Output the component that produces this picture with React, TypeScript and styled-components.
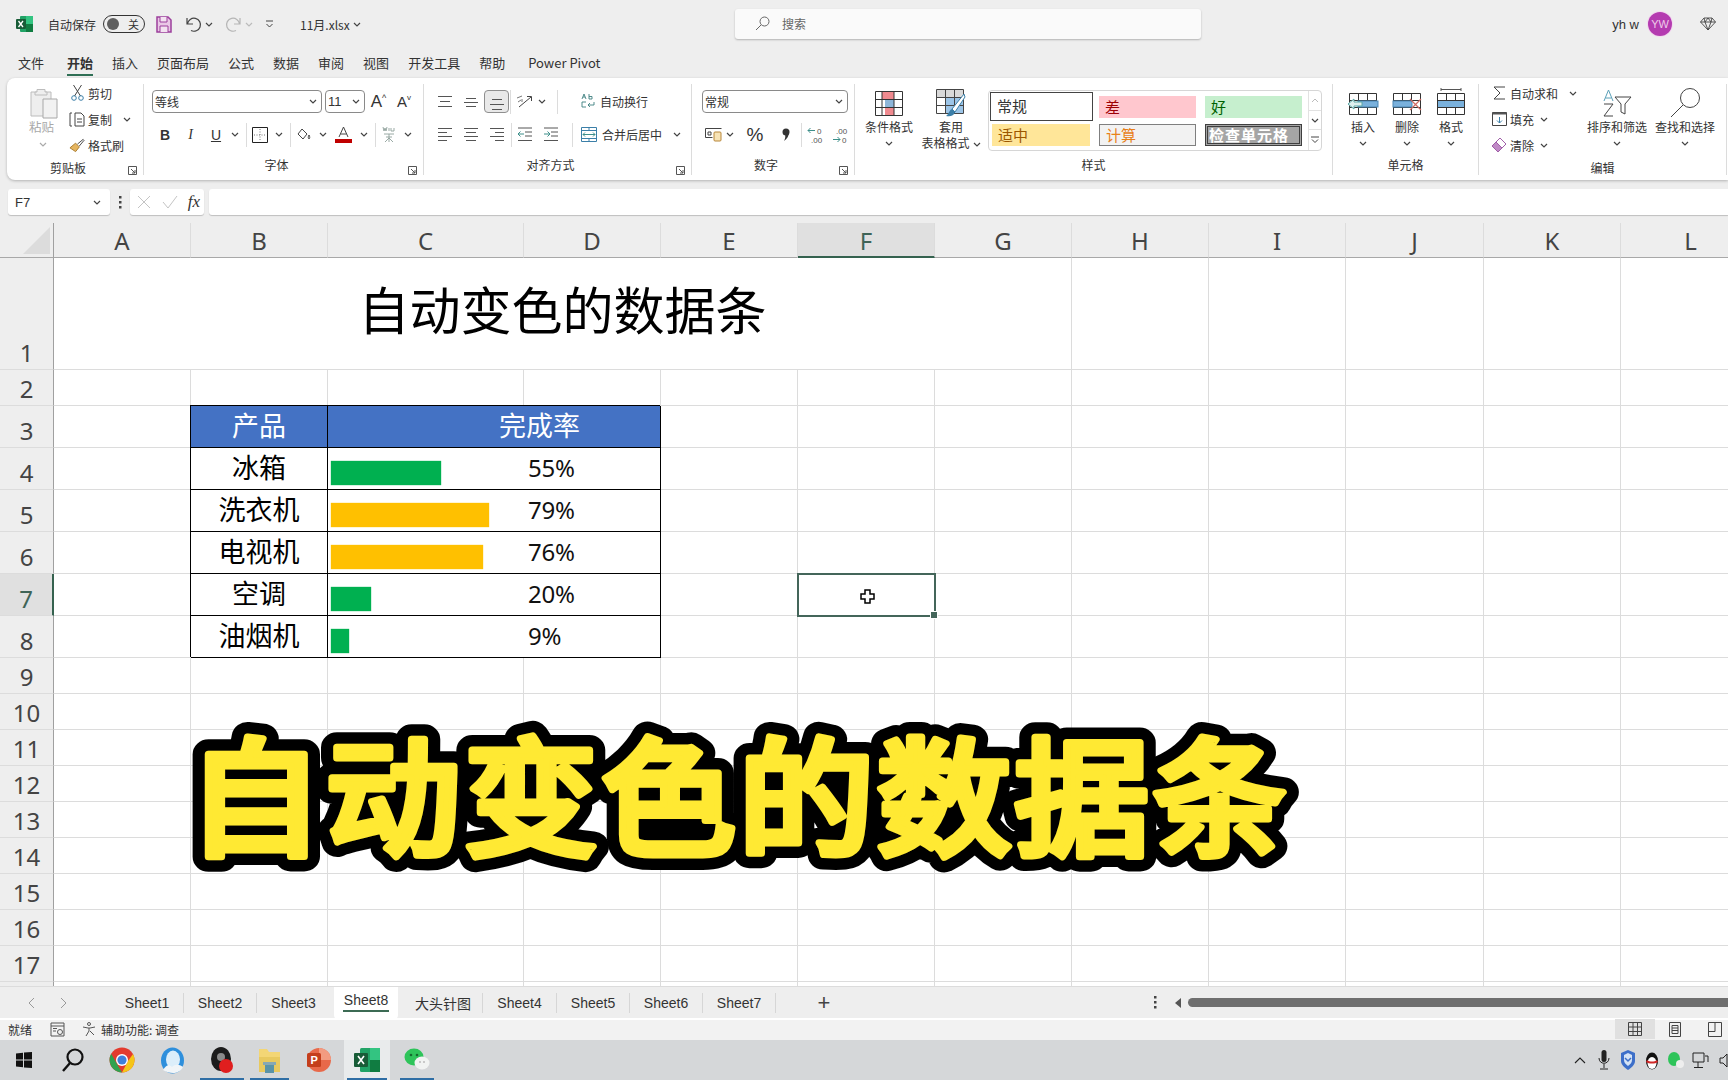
import React from "react";
import styled, { createGlobalStyle } from "styled-components";

const CJK = `"Noto Sans CJK SC", "Noto Sans", sans-serif`;

const Global = createGlobalStyle`
  html, body { margin: 0; padding: 0; background: #eee; }
  * { box-sizing: border-box; }
  body { font-family: ${CJK}; color: #333; }
`;

const Page = styled.div`
  position: relative; width: 1728px; height: 1080px; overflow: hidden;
  display: flex; flex-direction: column; background: #eeeeee;
`;

/* ---------- title bar ---------- */
const TitleBar = styled.header`
  height: 48px; display: grid; grid-template-columns: 735px 466px 1fr; align-items: center;
`;
const QuickAccess = styled.div`display: flex; align-items: center; padding-left: 16px; font-size: 12px;`;
const AutoSaveLabel = styled.span`margin-left: 15px; width: 48px; white-space: nowrap; color: #333;`;
const Toggle = styled.span`
  margin-left: 7px; width: 42px; height: 18px; border: 1px solid #333; border-radius: 9px;
  display: flex; align-items: center; justify-content: space-between; padding: 0 5px 0 3px; font-size: 11px;
  &::before { content: ""; width: 12px; height: 12px; border-radius: 50%; background: #5f5f5f; }
`;
const QuickSlot = styled.span<{ $ml: number }>`
  margin-left: ${p => p.$ml}px; display: inline-flex; align-items: center;
`;
const FileName = styled.span`margin-left: 26px; font-size: 12px; display: inline-flex; align-items: center; gap: 3px; color: #333;`;
const Search = styled.div`
  height: 30px; margin-top: -1px; background: #fafafa; border-radius: 3px; box-shadow: 0 1px 2px rgba(0,0,0,.25);
  display: flex; align-items: center; gap: 12px; padding-left: 20px; font-size: 12px; color: #666; padding-bottom: 1px;
`;
const UserArea = styled.div`display: flex; justify-content: flex-end; align-items: center; padding-right: 12px; font-size: 12px;`;
const UserName = styled.span`font-family: "Liberation Sans", sans-serif; font-size: 13px; color: #333;`;
const Avatar = styled.span`
  margin: 0 28px 0 9px; width: 24px; height: 24px; border-radius: 50%; background: #b43bb0; color: #eecbe9;
  display: flex; align-items: center; justify-content: center; font-size: 11px; font-family: "Liberation Sans", sans-serif;
  box-shadow: 0 0 0 1px #f2d9ef;
`;

/* ---------- menu ---------- */
const MenuBar = styled.nav`
  height: 30px; display: flex; align-items: center; gap: 19px; padding: 0 0 2px 18px; font-size: 13px; color: #333;
`;
const MenuItem = styled.span<{ $active?: boolean; $extra?: number }>`
  position: relative; white-space: nowrap; margin-left: ${p => p.$extra ?? 0}px;
  font-weight: ${p => (p.$active ? 700 : 400)};
  ${p => p.$active && `&::after { content: ""; position: absolute; left: 0; right: 0; bottom: -4px; height: 2px; background: #2f6f55; }`}
`;

/* ---------- ribbon ---------- */
const Ribbon = styled.section`
  margin-left: 7px; height: 102px; flex: none; background: #fff; border-radius: 8px 0 0 8px;
  box-shadow: 0 1px 3px rgba(0,0,0,.25); display: flex; padding-top: 6px; font-size: 12px; color: #333;
`;
const Group = styled.div<{ $w: number }>`
  position: relative; width: ${p => p.$w}px; height: 91px; flex: none; border-right: 1px solid #dcdcdc;
  display: flex; flex-direction: column;
`;
const GroupBody = styled.div`height: 74px; display: flex; align-items: flex-start;`;
const GroupLabel = styled.div<{ $launcher?: boolean }>`
  height: 20px; line-height: 20px; margin-top: 3px; text-align: center; font-size: 12px; color: #333;
  padding-right: ${p => (p.$launcher ? 14 : 0)}px;
`;
const Launcher = styled.span`position: absolute; right: 6px; bottom: 0; width: 9px; height: 9px; display: flex;`;
const PasteButton = styled.div`
  width: 63px; padding: 4px 0 0 23px; display: flex; flex-direction: column; align-items: flex-start; color: #a9a9a9; line-height: 16px;
`;
const PasteText = styled.span`margin: 0 0 7px -1px; font-size: 12.5px; white-space: nowrap;`;
const PasteChev = styled.span`display: flex; margin-left: 9px;`;
const SmallColumn = styled.div<{ $pl?: number; $w: number }>`
  width: ${p => p.$w}px; padding-left: ${p => p.$pl ?? 0}px; display: flex; flex-direction: column; gap: 6px; flex: none; margin-top: -1px;
`;
const SmallButton = styled.div`height: 20px; display: flex; align-items: center; gap: 3px; white-space: nowrap;`;
const SmallIcon = styled.span`width: 16px; display: flex; justify-content: center; flex: none;`;
const Stack = styled.div<{ $pl?: number }>`
  display: flex; flex-direction: column; padding: 6px 0 0 ${p => p.$pl ?? 0}px; gap: 10px;
`;
const ToolRow = styled.div`height: 23px; display: flex; align-items: center;`;
const Combo = styled.div<{ $w: number; $ml?: number }>`
  width: ${p => p.$w}px; margin-left: ${p => p.$ml ?? 0}px; height: 23px; border: 1px solid #8a8a8a; border-radius: 4px;
  display: flex; align-items: center; justify-content: space-between; padding: 0 4px 0 2px; font-size: 12px; color: #333; background: #fff;
`;
const Tool = styled.span<{ $w: number; $pressed?: boolean }>`
  width: ${p => p.$w}px; height: 23px; flex: none; display: flex; align-items: center; justify-content: center;
  ${p => p.$pressed && `background: #e9e9e9; border: 1px solid #8f8f8f; border-radius: 4px;`}
`;
const Letter = styled.span<{ $bold?: boolean; $italic?: boolean; $under?: boolean }>`
  font-family: ${p => (p.$italic ? `"Liberation Serif", serif` : `"Liberation Sans", sans-serif`)}; font-size: 14px;
  font-weight: ${p => (p.$bold ? 700 : 400)}; font-style: ${p => (p.$italic ? "italic" : "normal")};
  text-decoration: ${p => (p.$under ? "underline" : "none")}; color: #333;
`;
const ToolDivider = styled.span<{ $w: number }>`
  width: ${p => p.$w}px; height: 24px; flex: none; display: flex; justify-content: center;
  &::before { content: ""; width: 1px; background: #dcdcdc; }
`;
const LabelButton = styled.span<{ $w: number; $ml?: number }>`
  width: ${p => p.$w}px; margin-left: ${p => p.$ml ?? 0}px; height: 23px; display: flex; align-items: center; gap: 5px; white-space: nowrap; flex: none; padding-bottom: 1px;
`;
const BigButton = styled.div<{ $w: number; $ml?: number }>`
  width: ${p => p.$w}px; margin-left: ${p => p.$ml ?? 0}px; flex: none; padding-top: 3px;
  display: flex; flex-direction: column; align-items: center; line-height: 16px; white-space: nowrap;
`;
const BigIcon = styled.span`height: 32px; display: flex; align-items: center; justify-content: center;`;
const ChevLine = styled.span`height: 16px; display: flex; align-items: center; justify-content: center;`;
const InlineChev = styled.span<{ $ml?: number }>`display: inline-flex; vertical-align: middle; margin-left: ${p => p.$ml ?? 3}px;`;
const Gallery = styled.div`
  margin: 6px 0 0 7px; width: 334px; height: 61px; border: 1px solid #d6d6d6; border-radius: 4px; display: flex; flex: none;
`;
const GalleryGrid = styled.div`
  width: 319px; display: grid; grid-template-columns: 107px 106px 106px; grid-template-rows: 30px 30px; font-size: 15px;
`;
const StyleCell = styled.div<{ $kind: "normal" | "bad" | "good" | "neutral" | "calc" | "check" }>`
  display: flex; align-items: center; padding: 0 0 2px 6px;
  ${p => ({
    normal: "margin:1px 3px 0 1px;background:#fff;border:1px solid #444;color:#333;",
    bad: "margin:5px 6px 3px 3px;background:#ffc7ce;color:#9c0006;",
    good: "margin:5px 6px 3px 3px;background:#c6efce;color:#006100;",
    neutral: "margin:3px 6px 5px 3px;background:#ffe699;color:#9c5700;",
    calc: "margin:3px 6px 5px 3px;background:#f2f2f2;border:1px solid #7f7f7f;color:#e8811a;",
    check: "margin:3px 6px 5px 3px;background:#a5a5a5;border:3px double #3f3f3f;color:#fff;font-weight:700;letter-spacing:1px;padding-left:1px;",
  }[p.$kind])}
`;
const GalleryScroll = styled.div`
  flex: 1; display: grid; grid-template-rows: 20px 19px 1fr; border-left: 1px solid #e2e2e2;
`;
const ScrollButton = styled.span`
  display: flex; align-items: center; justify-content: center; border-bottom: 1px solid #e2e2e2;
  &:last-child { border-bottom: 0; }
`;

/* ---------- formula bar ---------- */
const FormulaBar = styled.div`
  margin-top: 9px; height: 26px; flex: none; display: flex; padding-left: 8px;
`;
const NameBox = styled.div`
  width: 102px; background: #fff; border-radius: 3px; box-shadow: 0 1px 1px rgba(0,0,0,.2);
  display: flex; align-items: center; justify-content: space-between; padding: 0 9px 0 7px; font: 13px "Liberation Sans", sans-serif; color: #333;
`;
const Dots = styled.span`width: 20px; display: flex; align-items: center; justify-content: center;`;
const FxBox = styled.div`
  width: 74px; background: #fff; border-radius: 3px; box-shadow: 0 1px 1px rgba(0,0,0,.2);
  display: flex; align-items: center; justify-content: space-between; padding: 0 4px 0 6px;
`;
const FxText = styled.span`font: italic 17px "Liberation Serif", serif; color: #333;`;
const FormulaInput = styled.div`
  flex: 1; margin-left: 5px; background: #fff; border-radius: 3px 0 0 3px; box-shadow: 0 1px 1px rgba(0,0,0,.2);
`;

/* ---------- sheet ---------- */
const colWidths = [54, 137, 137, 196, 137, 137, 137, 137, 137, 137, 138, 137, 140];
const rowHeights = [35, 112, 36, 42, 42, 42, 42, 42, 42, 36, 36, 36, 36, 36, 36, 36, 36, 36, 36];

const Sheet = styled.main`
  margin-top: 8px; height: 763px; flex: none; overflow: hidden; display: grid; background: #fff;
  grid-template-columns: ${colWidths.map(w => `${w}px`).join(" ")};
  grid-template-rows: ${rowHeights.map(h => `${h}px`).join(" ")};
`;
const Corner = styled.div`
  background: #eee; border-bottom: 1px solid #a8a8a8; border-right: 1px solid #a0a0a0; position: relative; display: flex;
  align-items: flex-end; justify-content: flex-end; padding: 0 3px 3px 0;
`;
const ColHead = styled.div<{ $sel?: boolean }>`
  background: ${p => (p.$sel ? "#e0e0e0" : "#eee")}; color: ${p => (p.$sel ? "#3f6457" : "#444")};
  border-bottom: ${p => (p.$sel ? "2px solid #35624f" : "1px solid #a8a8a8")};
  border-right: 1px solid #dcdcdc; display: flex; align-items: center; justify-content: center;
  font: 24px/1 "Noto Sans", sans-serif; padding-top: 2px;
`;
const RowHead = styled.div<{ $sel?: boolean }>`
  background: ${p => (p.$sel ? "#e0e0e0" : "#eee")}; color: ${p => (p.$sel ? "#3f6457" : "#444")};
  border-right: ${p => (p.$sel ? "2px solid #35624f" : "1px solid #a0a0a0")}; border-bottom: 1px solid #dcdcdc;
  display: flex; align-items: flex-end; justify-content: center; font: 24px/33px "Noto Sans", sans-serif;
`;
const Cell = styled.div<{ $span?: number; $sel?: boolean }>`
  position: relative; min-width: 0; border-right: 1px solid #dcdcdc; border-bottom: 1px solid #dcdcdc;
  ${p => p.$span && `grid-column: span ${p.$span};`}
  ${p => p.$sel && `z-index: 3; border: 2px solid #44665a; margin: -1px; display: flex; align-items: center; justify-content: center;
    &::after { content: ""; position: absolute; right: -4px; bottom: -4px; width: 6px; height: 6px; background: #44665a; border: 1px solid #fff; }`}
`;
const TitleCell = styled(Cell)`
  display: flex; align-items: center; justify-content: center; padding-bottom: 12px; font-size: 51px; color: #000;
`;
const TableCell = styled.div<{ $head?: boolean; $span?: number }>`
  position: relative; z-index: 1; min-width: 0; border-right: 1px solid #000; border-bottom: 1px solid #000; padding-bottom: 5px;
  box-shadow: -1px -1px 0 #000; display: flex; align-items: center; justify-content: center; color: ${p => (p.$head ? "#fff" : "#000")};
  background: ${p => (p.$head ? "#4472c4" : "#fff")}; font-size: 27px; line-height: 1;
  ${p => p.$span && `grid-column: span ${p.$span};`}
`;
const RateHead = styled(TableCell)`justify-content: flex-start; padding-left: 171px;`;
const RateCell = styled(TableCell)`justify-content: flex-start; align-items: stretch; padding-bottom: 0;`;
const BarTrack = styled.div`width: 200px; flex: none; padding: 13px 0 3px 3px;`;
const Bar = styled.div<{ $c: string }>`height: 24px; background: ${p => p.$c}; box-shadow: 0 0 1px ${p => p.$c};`;
const Percent = styled.span`align-self: center; padding-bottom: 2px; font: 24px/1 "Noto Sans", sans-serif; color: #111; letter-spacing: -.2px;`;
const Cursor = styled.span`display: flex; margin: 2px 0 0 2px;`;

/* ---------- headline overlay ---------- */
const Headline = styled.svg`
  position: absolute; left: 180px; top: 700px; z-index: 5; overflow: visible;
  font: 500 128px ${CJK}; letter-spacing: 2px;
`;
const HeadlineBack = styled.text`
  fill: #000; stroke: #000; stroke-width: 30px; stroke-linejoin: round; stroke-linecap: round;
`;
const HeadlineFront = styled.text`
  fill: #ffe933; stroke: #ffe933; stroke-width: 7px; stroke-linejoin: round; stroke-linecap: round;
`;

/* ---------- tabs / status / taskbar ---------- */
const TabBar = styled.div`
  height: 32px; flex: none; display: flex; align-items: center; background: #eee; border-top: 1px solid #dcdcdc; font-size: 14px; color: #333;
`;
const TabNav = styled.div`width: 111px; padding-left: 28px; display: flex; gap: 25px; flex: none;`;
const Tab = styled.span<{ $w: number; $active?: boolean; $noSep?: boolean; $pl?: number }>`
  width: ${p => p.$w}px; flex: none; height: ${p => (p.$active ? 32 : 20)}px; display: flex; justify-content: center; white-space: nowrap;
  align-items: center; font-family: "Liberation Sans", ${CJK}; padding-left: ${p => p.$pl ?? 0}px;
  border-right: ${p => (p.$noSep ? "0" : "1px solid #d6d6d6")};
  ${p => p.$active && `position: relative; background: #fff; border-radius: 0 0 4px 4px; padding-bottom: 5px; margin: 0 0 0 4px;
    &::after { content: ""; position: absolute; left: 9px; right: 9px; bottom: 7px; height: 2px; background: #3c6b54; }`}
`;
const AddTab = styled.span`margin-left: 38px; font: 22px/1 "Liberation Sans", sans-serif; color: #444; width: 20px; text-align: center;`;
const ScrollArea = styled.div`
  margin-left: auto; width: 580px; display: flex; align-items: center; flex: none;
`;
const ScrollDots = styled.span`width: 14px; display: flex; justify-content: center;`;
const ScrollLeft = styled.span`
  width: 0; height: 0; border: 5px solid transparent; border-right: 6px solid #555; border-left: 0; margin: 0 7px 0 13px;
`;
const ScrollThumb = styled.span`flex: 1; height: 9px; border-radius: 5px 0 0 5px; background: #6f6f6f;`;
const StatusBar = styled.div`
  height: 22px; flex: none; display: flex; align-items: center; background: #f2f2f2; border-top: 2px solid #fff; padding: 0 0 2px 8px; font-size: 12px; color: #333;
`;
const StatusSlot = styled.span<{ $ml: number }>`margin-left: ${p => p.$ml}px; display: flex; align-items: center; gap: 4px;`;
const ViewButtons = styled.div`margin: -2px -7px -2px auto; display: flex;`;
const ViewButton = styled.span<{ $on?: boolean }>`
  width: 40px; height: 20px; display: flex; align-items: center; justify-content: center; background: ${p => (p.$on ? "#e0e0e0" : "transparent")};
`;
const Taskbar = styled.footer`
  height: 40px; flex: none; background: #d5d7d9; display: flex; align-items: center;
`;
const TaskIcon = styled.span<{ $w: number; $ml?: number; $run?: boolean; $on?: boolean }>`
  position: relative; width: ${p => p.$w}px; margin-left: ${p => p.$ml ?? 0}px; height: 40px; flex: none; display: flex; align-items: center; justify-content: center;
  background: ${p => (p.$on ? "#e9ebec" : "transparent")};
  ${p => p.$run && `&::after { content: ""; position: absolute; left: 3px; right: 3px; bottom: 0; height: 2px; background: #2f6ea5; }`}
`;
const Tray = styled.div`margin-left: auto; display: flex; align-items: center; width: 160px; flex: none;`;
const TrayItem = styled.span`width: 24px; flex: none; display: flex; justify-content: center;`;

/* ---------- icons ---------- */
const Chev: React.FC<{ c?: string }> = ({ c = "#444" }) => (
  <svg width="8" height="5" viewBox="0 0 8 5"><path d="M1 1l3 3 3-3" fill="none" stroke={c} strokeWidth="1.2" /></svg>
);
const Lines: React.FC<{ kind: string }> = ({ kind }) => {
  const map: Record<string, number[][]> = {
    top: [[1, 2, 15], [3, 7, 13], [1, 12, 15]],
    mid: [[3, 4, 13], [1, 8, 15], [3, 12, 13]],
    bot: [[3, 5, 13], [1, 10, 15], [3, 15, 13]],
    left: [[1, 1, 15], [1, 5, 10], [1, 9, 15], [1, 13, 10]],
    center: [[1, 1, 15], [3, 5, 13], [1, 9, 15], [3, 13, 13]],
    right: [[1, 1, 15], [6, 5, 15], [1, 9, 15], [6, 13, 15]],
  };
  return (
    <svg width="16" height="16" viewBox="0 0 16 16">
      {map[kind].map((l, i) => <line key={i} x1={l[0]} x2={l[2]} y1={l[1] + .5} y2={l[1] + .5} stroke="#555" />)}
    </svg>
  );
};
const Indent: React.FC<{ out?: boolean }> = ({ out }) => (
  <svg width="16" height="15" viewBox="0 0 16 15">
    <path d="M1 1h14M8 5h7M8 9h7M1 13.5h14" stroke="#555" fill="none" />
    <path d={out ? "M1 7h6M3.5 4.5L1 7l2.5 2.5" : "M1 7h6M4.5 4.5L7 7 4.5 9.500"} stroke="#3d8f8a" fill="none" />
  </svg>
);
const GridIcon: React.FC<{ kind: string }> = ({ kind }) => (
  <svg width="32" height="30" viewBox="0 0 32 30">
    <g fill="none" stroke="#333">
      <path d="M2.500 5.500h27v21h-27zM2.500 12.500h27M2.500 19.500h27M11.500 5.500v21M20.500 5.500v21" />
    </g>
    {kind === "insert" && <><rect x="11" y="13" width="20" height="6" fill="#7ab1dc" stroke="#4a87b5" /><path d="M15 14v4H7v3l-6-5 6-5v3z" fill="#dff0ef" stroke="#5aa6a6" /></>}
    {kind === "delete" && <><rect x="2" y="13" width="19" height="6" fill="#7ab1dc" stroke="#4a87b5" /><path d="M19 11l11 11M30 11L19 22" stroke="#d06a62" strokeWidth="1.2" /></>}
    {kind === "format" && <><rect x="3" y="12.500" width="26" height="7" fill="#7ab1dc" /><path d="M6 1.500h20M6 0v3M26 0v3" stroke="#555" /><path d="M2.500 12.500h27M2.500 19.500h27" stroke="#333" fill="none" /></>}
  </svg>
);

const ExcelLogo = () => (
  <svg width="17" height="18" viewBox="0 0 17 18">
    <rect x="4" y="1" width="13" height="16" rx="1" fill="#21a366" />
    <rect x="10" y="1" width="7" height="8" fill="#33c481" />
    <rect x="10" y="9" width="7" height="8" fill="#107c41" />
    <rect x="0" y="4" width="10" height="10" rx="1" fill="#185c37" />
    <path d="M2.500 6l4.500 6M7 6l-4.500 6" stroke="#fff" strokeWidth="1.300" />
  </svg>
);

const rows = [
  { name: "冰箱", pct: 55 },
  { name: "洗衣机", pct: 79 },
  { name: "电视机", pct: 76 },
  { name: "空调", pct: 20 },
  { name: "油烟机", pct: 9 },
];
const cols = ["A", "B", "C", "D", "E", "F", "G", "H", "I", "J", "K", "L"];

const SheetGrid = () => {
  const blanks = (from: number, row: number) =>
    cols.slice(from).map(c => <Cell key={c + row} $sel={c === "F" && row === 7}>
      {c === "F" && row === 7 && (
        <Cursor>
          <svg width="15" height="15" viewBox="0 0 15 15"><path d="M5 1h5v4h4v5h-4v4H5v-4H1V5h4z" fill="#fff" stroke="#000" strokeWidth="1.500" /></svg>
        </Cursor>
      )}
    </Cell>);
  const out: React.ReactNode[] = [];
  for (let r = 1; r <= 18; r++) {
    out.push(<RowHead key={"h" + r} $sel={r === 7}>{r <= 17 ? r : ""}</RowHead>);
    if (r === 1) {
      out.push(<TitleCell key="title" $span={7}>自动变色的数据条</TitleCell>);
      out.push(...blanks(7, r));
    } else if (r === 3) {
      out.push(<Cell key="a3" />, <TableCell key="b3" $head>产品</TableCell>, <RateHead key="c3" $head $span={2}>完成率</RateHead>);
      out.push(...blanks(4, r));
    } else if (r >= 4 && r <= 8) {
      const d = rows[r - 4];
      out.push(
        <Cell key={"a" + r} />,
        <TableCell key={"b" + r}>{d.name}</TableCell>,
        <RateCell key={"c" + r} $span={2}>
          <BarTrack><Bar $c={d.pct > 70 ? "#ffc000" : "#00b050"} style={{ width: d.pct * 2 }} /></BarTrack>
          <Percent>{d.pct}%</Percent>
        </RateCell>,
      );
      out.push(...blanks(4, r));
    } else {
      out.push(...blanks(0, r));
    }
  }
  return (
    <Sheet>
      <Corner>
        <svg width="27" height="27" viewBox="0 0 27 27"><path d="M27 0v27H0z" fill="#dcdcdc" /></svg>
      </Corner>
      {cols.map(c => <ColHead key={c} $sel={c === "F"}>{c}</ColHead>)}
      {out}
    </Sheet>
  );
};

const LauncherIcon = () => (
  <Launcher>
    <svg width="9" height="9" viewBox="0 0 9 9"><path d="M.5 8.500V.5h8v8zM3 3l4 4M7 4v3H4" fill="none" stroke="#555" /></svg>
  </Launcher>
);
const MiniDots = () => (
  <svg width="3" height="13" viewBox="0 0 3 13"><path d="M0 0h2.500v2.500H0zM0 5h2.500v2.500H0zM0 10h2.500v2.500H0z" fill="#444" /></svg>
);

export default function App() {
  return (
    <Page>
      <Global />
      <TitleBar>
        <QuickAccess>
          <ExcelLogo />
          <AutoSaveLabel>自动保存</AutoSaveLabel>
          <Toggle>关</Toggle>
          <QuickSlot $ml={11}>
            <svg width="16" height="17" viewBox="0 0 16 17"><path d="M1 1h11l3 3v12H1z" fill="#e9c7e6" stroke="#9c3f9c" strokeWidth="1.500" /><path d="M4 1v5h7V1M4 16v-6h8v6" fill="#f3e2f1" stroke="#9c3f9c" /></svg>
          </QuickSlot>
          <QuickSlot $ml={13}>
            <svg width="17" height="17" viewBox="0 0 17 17"><path d="M2 2v6h6M2.500 8A6.500 6.500 0 1 1 6 14.500" fill="none" stroke="#444" strokeWidth="1.200" /></svg>
          </QuickSlot>
          <QuickSlot $ml={3}><Chev /></QuickSlot>
          <QuickSlot $ml={12}>
            <svg width="17" height="17" viewBox="0 0 17 17"><path d="M15 2v6H9M14.500 8A6.500 6.500 0 1 0 11 14.500" fill="none" stroke="#b5b5b5" strokeWidth="1.200" /></svg>
          </QuickSlot>
          <QuickSlot $ml={3}><Chev c="#bbb" /></QuickSlot>
          <QuickSlot $ml={12}>
            <svg width="9" height="9" viewBox="0 0 9 9"><path d="M1 1h7M1.500 4l3 3 3-3" fill="none" stroke="#444" /></svg>
          </QuickSlot>
          <FileName>11月.xlsx <Chev /></FileName>
        </QuickAccess>
        <Search>
          <svg width="15" height="15" viewBox="0 0 15 15"><circle cx="9.500" cy="5.500" r="4.500" fill="none" stroke="#666" /><path d="M6 9l-5 5" stroke="#666" /></svg>
          搜索
        </Search>
        <UserArea>
          <UserName>yh w</UserName>
          <Avatar>YW</Avatar>
          <svg width="16" height="14" viewBox="0 0 16 14"><path d="M4 1h8l3.500 4L8 13 .5 5zM.5 5h15M5 5l3 8 3-8M4 1l1 4 3-4 3 4 1-4" fill="none" stroke="#444" strokeWidth=".9" /></svg>
        </UserArea>
      </TitleBar>

      <MenuBar>
        <MenuItem>文件</MenuItem>
        <MenuItem $active $extra={4}>开始</MenuItem>
        <MenuItem>插入</MenuItem>
        <MenuItem>页面布局</MenuItem>
        <MenuItem>公式</MenuItem>
        <MenuItem>数据</MenuItem>
        <MenuItem>审阅</MenuItem>
        <MenuItem>视图</MenuItem>
        <MenuItem>开发工具</MenuItem>
        <MenuItem>帮助</MenuItem>
        <MenuItem $extra={4}>Power Pivot</MenuItem>
      </MenuBar>

      <Ribbon>
        <Group $w={137}>
          <GroupBody>
            <PasteButton>
              <svg width="28" height="31" viewBox="0 0 28 31">
                <path d="M1 4h20v24H1z" fill="#eee" stroke="#bcbcbc" /><path d="M7 4V1.500h8V4h2v3H5V4z" fill="#eee" stroke="#bcbcbc" />
                <path d="M13 11h14v19H13z" fill="#f2f2f2" stroke="#a8a8a8" />
              </svg>
              <PasteText>粘贴</PasteText>
              <PasteChev><Chev c="#aaa" /></PasteChev>
            </PasteButton>
            <SmallColumn $w={74}>
              <SmallButton>
                <SmallIcon><svg width="13" height="16" viewBox="0 0 13 16"><path d="M2.500 0l7 11M10.500 0l-7 11" stroke="#444" fill="none" /><circle cx="3" cy="13" r="2.300" fill="none" stroke="#3b7fa8" /><circle cx="10" cy="13" r="2.300" fill="none" stroke="#3b7fa8" /></svg></SmallIcon>
                剪切
              </SmallButton>
              <SmallButton>
                <SmallIcon><svg width="16" height="15" viewBox="0 0 16 15"><path d="M3 1H1v13h2M6 1h6l3 3v10H6zM8 7h5M8 10h5" fill="none" stroke="#444" /></svg></SmallIcon>
                复制 <InlineChev $ml={8}><Chev /></InlineChev>
              </SmallButton>
              <SmallButton>
                <SmallIcon><svg width="17" height="15" viewBox="0 0 17 15"><path d="M1 10l6-5 4 4-4 5z" fill="#e5b560" stroke="#a97a2b" /><path d="M9 6l6-5 1 1-5 6" fill="#fff" stroke="#444" /></svg></SmallIcon>
                格式刷
              </SmallButton>
            </SmallColumn>
          </GroupBody>
          <GroupLabel $launcher>剪贴板</GroupLabel>
          <LauncherIcon />
        </Group>

        <Group $w={280}>
          <GroupBody>
            <Stack $pl={8}>
              <ToolRow>
                <Combo $w={170}>等线 <Chev /></Combo>
                <Combo $w={40} $ml={3}><Letter style={{ fontSize: 13 }}>11</Letter> <Chev /></Combo>
                <Tool $w={27}><Letter style={{ fontSize: 17 }}>A</Letter><Letter style={{ fontSize: 9, marginTop: -8 }}>^</Letter></Tool>
                <Tool $w={24}><Letter style={{ fontSize: 15 }}>A</Letter><Letter style={{ fontSize: 8, marginTop: -8 }}>v</Letter></Tool>
              </ToolRow>
              <ToolRow>
                <Tool $w={26}><Letter $bold>B</Letter></Tool>
                <Tool $w={25}><Letter $italic>I</Letter></Tool>
                <Tool $w={26}><Letter $under>U</Letter></Tool>
                <Tool $w={12}><Chev /></Tool>
                <ToolDivider $w={10} />
                <Tool $w={18}>
                  <svg width="16" height="16" viewBox="0 0 16 16"><path d="M.5.5h15v15H.5z" fill="none" stroke="#222" /><path d="M8 2v12M2 8h12" stroke="#777" strokeDasharray="1 1.500" /></svg>
                </Tool>
                <Tool $w={20}><Chev /></Tool>
                <ToolDivider $w={2} />
                <Tool $w={26}>
                  <svg width="14" height="14" viewBox="0 0 14 14"><path d="M5 1l5 5-4 5-5-5zM12 7c1 2 1 3 0 4-1-1-1-2 0-4z" fill="none" stroke="#444" /></svg>
                </Tool>
                <Tool $w={12}><Chev /></Tool>
                <Tool $w={29}>
                  <svg width="17" height="17" viewBox="0 0 17 17"><path d="M4 11L8.500 1 13 11M5.500 8h6" fill="none" stroke="#444" /><rect x="0" y="13" width="17" height="4" fill="#c00000" /></svg>
                </Tool>
                <Tool $w={12}><Chev /></Tool>
                <ToolDivider $w={10} />
                <Tool $w={18}>
                  <svg width="14" height="18" viewBox="0 0 14 18"><path d="M1 1l1 4 1-3 1 3 1-4M7 2v3M9 2v3h3V2M2 8h10M4 11h6M7 8v8M3 16l4-4 4 4" fill="none" stroke="#8fa09b" strokeWidth=".9" /></svg>
                </Tool>
                <Tool $w={20}><Chev /></Tool>
              </ToolRow>
            </Stack>
          </GroupBody>
          <GroupLabel $launcher>字体</GroupLabel>
          <LauncherIcon />
        </Group>

        <Group $w={268}>
          <GroupBody>
            <Stack $pl={8}>
              <ToolRow>
                <Tool $w={26}><Lines kind="top" /></Tool>
                <Tool $w={26}><Lines kind="mid" /></Tool>
                <Tool $w={25} $pressed><Lines kind="bot" /></Tool>
                <ToolDivider $w={3} />
                <Tool $w={24}>
                  <svg width="18" height="17" viewBox="0 0 18 17"><path d="M4 14L16 4M12 3.500h4.500V8" fill="none" stroke="#444" /><path d="M2 5l5-2M3 9l3-2M7 9V6" stroke="#777" fill="none" /></svg>
                </Tool>
                <Tool $w={12}><Chev /></Tool>
                <ToolDivider $w={18} />
                <LabelButton $w={90} $ml={15}>
                  <svg width="14" height="16" viewBox="0 0 14 16"><path d="M1 6l2-5 2 5M2 4h2M8 1v5h3V3.500H8M5 9H1v5h4M13 9v3H7M9 10l-2 2 2 2" fill="none" stroke="#3d7f7f" strokeWidth=".9" /></svg>
                  自动换行
                </LabelButton>
              </ToolRow>
              <ToolRow>
                <Tool $w={26}><Lines kind="left" /></Tool>
                <Tool $w={26}><Lines kind="center" /></Tool>
                <Tool $w={26}><Lines kind="right" /></Tool>
                <ToolDivider $w={2} />
                <Tool $w={26}><Indent out /></Tool>
                <Tool $w={26}><Indent /></Tool>
                <ToolDivider $w={17} />
                <LabelButton $w={104}>
                  <svg width="16" height="15" viewBox="0 0 16 15"><path d="M.5.5h15v14H.5zM.5 3.500h15M.5 11.500h15M8 .5v3M8 11.500v3" fill="none" stroke="#3b7fa8" /><path d="M2 7.500h12M4 5.500l-2 2 2 2M12 5.500l2 2-2 2" fill="none" stroke="#3d8f8a" /></svg>
                  合并后居中
                  <InlineChev $ml={6}><Chev /></InlineChev>
                </LabelButton>
              </ToolRow>
            </Stack>
          </GroupBody>
          <GroupLabel $launcher>对齐方式</GroupLabel>
          <LauncherIcon />
        </Group>

        <Group $w={163}>
          <GroupBody>
            <Stack $pl={10}>
              <ToolRow><Combo $w={146}>常规 <Chev /></Combo></ToolRow>
              <ToolRow>
                <Tool $w={22}>
                  <svg width="17" height="15" viewBox="0 0 17 15"><path d="M.5 1.500h16M.5 1.500v9h7" fill="none" stroke="#444" /><rect x="9" y="5" width="7" height="9" rx="1" fill="#f7e3b5" stroke="#b8873a" /><path d="M3 5h3v3H3z" fill="none" stroke="#444" /></svg>
                </Tool>
                <Tool $w={12}><Chev /></Tool>
                <Tool $w={38}><Letter style={{ fontSize: 19 }}>%</Letter></Tool>
                <Tool $w={23}>
                  <svg width="8" height="13" viewBox="0 0 8 13"><circle cx="4" cy="4" r="3.500" fill="#333" /><path d="M7 4c0 4-2 7-5 9 1.500-3 1.500-5 1-7z" fill="#333" /></svg>
                </Tool>
                <ToolDivider $w={8} />
                <Tool $w={22}>
                  <svg width="18" height="18" viewBox="0 0 18 18"><path d="M8 4.500H1M3.500 2L1 4.500 3.500 7" fill="none" stroke="#3d8f8a" /><text x="10" y="8" fontSize="8" fill="#555" fontFamily="Liberation Sans">0</text><text x="4" y="17" fontSize="8" fill="#555" fontFamily="Liberation Sans">.00</text></svg>
                </Tool>
                <Tool $w={25}>
                  <svg width="18" height="18" viewBox="0 0 18 18"><path d="M2 13.500h7M6.500 11L9 13.500 6.500 16" fill="none" stroke="#3d8f8a" /><text x="5" y="8" fontSize="8" fill="#555" fontFamily="Liberation Sans">.00</text><text x="11" y="17" fontSize="8" fill="#555" fontFamily="Liberation Sans">0</text></svg>
                </Tool>
              </ToolRow>
            </Stack>
          </GroupBody>
          <GroupLabel $launcher>数字</GroupLabel>
          <LauncherIcon />
        </Group>

        <Group $w={478}>
          <GroupBody>
            <BigButton $w={60} $ml={4}>
              <BigIcon>
                <svg width="28" height="25" viewBox="0 0 28 25">
                  <rect x="7" y="1" width="12" height="7" fill="#f08a8f" /><rect x="10" y="8" width="9" height="8" fill="#8eb6d9" /><rect x="10" y="16" width="9" height="8" fill="#f08a8f" />
                  <path d="M.5.5h27v24H.5zM.5 8.500h27M.5 16.500h27M7 .5v24M19 .5v24" fill="none" stroke="#333" />
                </svg>
              </BigIcon>
              条件格式
              <ChevLine><Chev /></ChevLine>
            </BigButton>
            <BigButton $w={60} $ml={2}>
              <BigIcon>
                <svg width="30" height="29" viewBox="0 0 30 29">
                  <rect x="1" y="1" width="27" height="7" fill="#d9d9d9" /><rect x="10" y="8" width="18" height="16" fill="#9cc5e8" />
                  <path d="M.5.5h27v24H.5zM.5 8.500h27M.5 16.500h27M9.500.5v24M18.500.5v24" fill="none" stroke="#444" />
                  <path d="M28 5L16 20l3 3L29 8z" fill="#fff" stroke="#3b7fa8" /><path d="M16 20c-3 1-3 5-6 7 4 1 8 0 9-4z" fill="#3b7fa8" />
                </svg>
              </BigIcon>
              套用
              <span>表格格式<InlineChev><Chev /></InlineChev></span>
            </BigButton>
            <Gallery>
              <GalleryGrid>
                <StyleCell $kind="normal">常规</StyleCell>
                <StyleCell $kind="bad">差</StyleCell>
                <StyleCell $kind="good">好</StyleCell>
                <StyleCell $kind="neutral">适中</StyleCell>
                <StyleCell $kind="calc">计算</StyleCell>
                <StyleCell $kind="check">检查单元格</StyleCell>
              </GalleryGrid>
              <GalleryScroll>
                <ScrollButton><svg width="8" height="5" viewBox="0 0 8 5"><path d="M1 4l3-3 3 3" fill="none" stroke="#bbb" /></svg></ScrollButton>
                <ScrollButton><Chev /></ScrollButton>
                <ScrollButton><svg width="8" height="8" viewBox="0 0 8 8"><path d="M0 1h8M1 3.500l3 3 3-3" fill="none" stroke="#444" /></svg></ScrollButton>
              </GalleryScroll>
            </Gallery>
          </GroupBody>
          <GroupLabel>样式</GroupLabel>
        </Group>

        <Group $w={146}>
          <GroupBody>
            <BigButton $w={44} $ml={8}><BigIcon><GridIcon kind="insert" /></BigIcon>插入<ChevLine><Chev /></ChevLine></BigButton>
            <BigButton $w={44}><BigIcon><GridIcon kind="delete" /></BigIcon>删除<ChevLine><Chev /></ChevLine></BigButton>
            <BigButton $w={44}><BigIcon><GridIcon kind="format" /></BigIcon>格式<ChevLine><Chev /></ChevLine></BigButton>
          </GroupBody>
          <GroupLabel>单元格</GroupLabel>
        </Group>

        <Group $w={248}>
          <GroupBody>
            <SmallColumn $w={108} $pl={12}>
              <SmallButton>
                <SmallIcon><svg width="13" height="14" viewBox="0 0 13 14"><path d="M12 1H1l6 6-6 6h11" fill="none" stroke="#444" /></svg></SmallIcon>
                自动求和 <InlineChev $ml={8}><Chev /></InlineChev>
              </SmallButton>
              <SmallButton>
                <SmallIcon><svg width="15" height="14" viewBox="0 0 15 14"><path d="M.5.5h14v13H.5z" fill="none" stroke="#444" /><path d="M.5.5h14v2H.5z" fill="#555" /><path d="M7.500 5v6M5 8.500l2.500 2.500L10 8.500" fill="none" stroke="#3b7fa8" /></svg></SmallIcon>
                填充 <InlineChev><Chev /></InlineChev>
              </SmallButton>
              <SmallButton>
                <SmallIcon><svg width="15" height="14" viewBox="0 0 15 14"><path d="M0 8l8-8 6 6-8 8z" fill="#fff" stroke="#a05ea8" /><path d="M0 8l4-4 6 6-4 4z" fill="#c08ac6" stroke="#a05ea8" /></svg></SmallIcon>
                清除 <InlineChev><Chev /></InlineChev>
              </SmallButton>
            </SmallColumn>
            <BigButton $w={60}>
              <BigIcon>
                <svg width="30" height="28" viewBox="0 0 30 28">
                  <path d="M2 12L6.500 1 11 12M3.500 9h6" fill="none" stroke="#5aa0b8" /><path d="M2 15h9L2 27h9" fill="none" stroke="#444" />
                  <path d="M13 8h16l-6 7v10l-4-2v-8z" fill="none" stroke="#444" />
                </svg>
              </BigIcon>
              排序和筛选
              <ChevLine><Chev /></ChevLine>
            </BigButton>
            <BigButton $w={70} $ml={3}>
              <BigIcon>
                <svg width="30" height="30" viewBox="0 0 30 30"><circle cx="20" cy="10" r="9.500" fill="none" stroke="#444" /><path d="M13 17L1 29" stroke="#444" /></svg>
              </BigIcon>
              查找和选择
              <ChevLine><Chev /></ChevLine>
            </BigButton>
          </GroupBody>
          <GroupLabel>编辑</GroupLabel>
        </Group>
      </Ribbon>

      <FormulaBar>
        <NameBox>F7 <Chev /></NameBox>
        <Dots><MiniDots /></Dots>
        <FxBox>
          <svg width="16" height="14" viewBox="0 0 16 14"><path d="M2 1l12 12M14 1L2 13" stroke="#c4c4c4" fill="none" /></svg>
          <svg width="16" height="14" viewBox="0 0 16 14"><path d="M1 7l5 6L15 1" stroke="#c4c4c4" fill="none" /></svg>
          <FxText>fx</FxText>
        </FxBox>
        <FormulaInput />
      </FormulaBar>

      <SheetGrid />

      <Headline width="1140" height="180" viewBox="0 0 1140 180">
        <g transform="scale(1.06 1)">
          <HeadlineBack x="7" y="146" aria-hidden="true">自动变色的数据条</HeadlineBack>
          <HeadlineFront x="7" y="146">自动变色的数据条</HeadlineFront>
        </g>
      </Headline>

      <TabBar>
        <TabNav>
          <svg width="7" height="12" viewBox="0 0 7 12"><path d="M6 1L1 6l5 5" fill="none" stroke="#999" /></svg>
          <svg width="7" height="12" viewBox="0 0 7 12"><path d="M1 1l5 5-5 5" fill="none" stroke="#999" /></svg>
        </TabNav>
        <Tab $w={73}>Sheet1</Tab>
        <Tab $w={73}>Sheet2</Tab>
        <Tab $w={73} $noSep>Sheet3</Tab>
        <Tab $w={64} $active $noSep>Sheet8</Tab>
        <Tab $w={85} $pl={6}>大头针图</Tab>
        <Tab $w={74}>Sheet4</Tab>
        <Tab $w={73}>Sheet5</Tab>
        <Tab $w={73}>Sheet6</Tab>
        <Tab $w={73}>Sheet7</Tab>
        <AddTab>+</AddTab>
        <ScrollArea>
          <ScrollDots><MiniDots /></ScrollDots>
          <ScrollLeft />
          <ScrollThumb />
        </ScrollArea>
      </TabBar>

      <StatusBar>
        就绪
        <StatusSlot $ml={18}>
          <svg width="15" height="15" viewBox="0 0 15 15"><path d="M1 1h13v13H1zM1 4h13M3 6.500h4M3 9h3" fill="none" stroke="#555" /><circle cx="10" cy="10" r="2.500" fill="none" stroke="#555" /></svg>
        </StatusSlot>
        <StatusSlot $ml={17}>
          <svg width="15" height="15" viewBox="0 0 15 15"><circle cx="7" cy="2" r="1.500" fill="none" stroke="#555" /><path d="M1 5l5 1 2 0 5-1M7 6v3l-3 5M8 9l4 4" fill="none" stroke="#555" /></svg>
          辅助功能: 调查
        </StatusSlot>
        <ViewButtons>
          <ViewButton $on><svg width="14" height="14" viewBox="0 0 14 14"><path d="M.5.5h13v13H.5zM.5 5h13M.5 9.500h13M5 .5v13M9.500.5v13" fill="none" stroke="#444" /></svg></ViewButton>
          <ViewButton><svg width="12" height="15" viewBox="0 0 12 15"><path d="M.5.5h11v14H.5zM3 3.500h6v8H3zM3 6h6M3 8.500h6" fill="none" stroke="#444" /></svg></ViewButton>
          <ViewButton><svg width="14" height="15" viewBox="0 0 14 15"><path d="M.5.5h13v14H.5zM7 .5v9H.5" fill="none" stroke="#444" /></svg></ViewButton>
        </ViewButtons>
      </StatusBar>

      <Taskbar>
        <TaskIcon $w={48}>
          <svg width="16" height="16" viewBox="0 0 16 16"><path d="M0 1.500l7-.8v6.800H0zM8 .6l8-.6v7.500H8zM0 8.500h7v6.800l-7-.8zM8 8.500h8V16l-8-.6z" fill="#111" /></svg>
        </TaskIcon>
        <TaskIcon $w={49}>
          <svg width="26" height="26" viewBox="0 0 26 26"><circle cx="15" cy="10" r="7.500" fill="none" stroke="#111" strokeWidth="2.200" /><path d="M10 16l-7 8" stroke="#111" strokeWidth="2.400" /></svg>
        </TaskIcon>
        <TaskIcon $w={50}>
          <svg width="26" height="26" viewBox="0 0 26 26"><circle cx="13" cy="13" r="12.500" fill="#e33b2e" /><path d="M24 7A12.500 12.500 0 0 1 13 25.500L19 14z" fill="#f5c518" /><path d="M13 25.500A12.500 12.500 0 0 1 2.200 6.800L8 17z" fill="#30a24f" /><circle cx="13" cy="13" r="6" fill="#fff" /><circle cx="13" cy="13" r="4.600" fill="#3f7fd9" /></svg>
        </TaskIcon>
        <TaskIcon $w={50}>
          <svg width="25" height="27" viewBox="0 0 25 27"><ellipse cx="12.500" cy="13.500" rx="11.500" ry="13" fill="#2e8fdc" /><ellipse cx="13" cy="12.500" rx="7" ry="9" fill="#dceefa" /><path d="M3 23c3-5 6-6 9-3 3-3 7-3 11 0-2 4-6 6-10 6-4 0-7-1-10-3z" fill="#f1f5f8" /></svg>
        </TaskIcon>
        <TaskIcon $w={50} $run>
          <svg width="24" height="28" viewBox="0 0 24 28"><ellipse cx="11" cy="13" rx="10" ry="12" fill="#1c1c1c" /><circle cx="11" cy="11" r="4" fill="#8a8a8a" /><circle cx="16" cy="20" r="7" fill="#e01e1e" /></svg>
        </TaskIcon>
        <TaskIcon $w={45} $run>
          <svg width="23" height="26" viewBox="0 0 23 26"><path d="M1 2h8l2 3h11v20H1z" fill="#f3d675" /><rect x="1" y="10" width="21" height="15" fill="#e8c95f" /><path d="M7 18h9v8H7z" fill="#5a93a8" /><rect x="5" y="15" width="13" height="3" fill="#87a8b4" /></svg>
        </TaskIcon>
        <TaskIcon $w={52}>
          <svg width="26" height="26" viewBox="0 0 26 26"><circle cx="14" cy="13" r="12" fill="#e8694a" /><path d="M14 1a12 12 0 0 1 12 12H14z" fill="#f39b80" /><rect x="2" y="6" width="14" height="14" rx="1.500" fill="#c43e1c" /><text x="5.500" y="17" fontSize="11" fontWeight="700" fill="#fff" fontFamily="Liberation Sans">P</text></svg>
        </TaskIcon>
        <TaskIcon $w={46} $on $run>
          <svg width="26" height="26" viewBox="0 0 26 26"><rect x="6" y="1" width="20" height="24" rx="1.500" fill="#21a366" /><rect x="16" y="1" width="10" height="12" fill="#33c481" /><rect x="16" y="13" width="10" height="12" fill="#107c41" /><rect x="0" y="6" width="14" height="14" rx="1" fill="#185c37" /><path d="M4 9l6 8M10 9l-6 8" stroke="#fff" strokeWidth="1.600" /></svg>
        </TaskIcon>
        <TaskIcon $w={40} $ml={7} $run>
          <svg width="26" height="24" viewBox="0 0 26 24"><ellipse cx="10" cy="9" rx="9.500" ry="8.500" fill="#2ec45a" /><ellipse cx="18" cy="15" rx="7.500" ry="6.500" fill="#f1f3f2" /><circle cx="7" cy="7" r="1.300" fill="#146b2f" /><circle cx="13" cy="7" r="1.300" fill="#146b2f" /><circle cx="16" cy="14" r="1" fill="#bbb" /><circle cx="20" cy="14" r="1" fill="#bbb" /></svg>
        </TaskIcon>
        <Tray>
          <TrayItem><svg width="12" height="7" viewBox="0 0 12 7"><path d="M1 6l5-5 5 5" fill="none" stroke="#222" strokeWidth="1.100" /></svg></TrayItem>
          <TrayItem><svg width="12" height="20" viewBox="0 0 12 20"><rect x="3.500" y="0" width="5" height="12" rx="2.500" fill="#222" /><path d="M1 8c0 7 10 7 10 0M6 14v4M2 19h8" fill="none" stroke="#222" /></svg></TrayItem>
          <TrayItem><svg width="16" height="20" viewBox="0 0 16 20"><path d="M8 0l7 3v8c0 4-4 7-7 9-3-2-7-5-7-9V3z" fill="#3d6fc9" /><path d="M8 3l4 2v5c0 3-2 4-4 6-2-2-4-3-4-6V5z" fill="#d5e3f5" /><path d="M5 8l3 3 3-3" fill="none" stroke="#3d6fc9" strokeWidth="1.500" /></svg></TrayItem>
          <TrayItem><svg width="14" height="20" viewBox="0 0 14 20"><ellipse cx="7" cy="11" rx="6" ry="8.500" fill="#111" /><ellipse cx="7" cy="13" rx="4.500" ry="6" fill="#fff" /><path d="M2 10c3 2 7 2 10 0l1 2c-3 2-9 2-12 0z" fill="#d02a2a" /></svg></TrayItem>
          <TrayItem><svg width="16" height="16" viewBox="0 0 16 16"><ellipse cx="6" cy="7" rx="6" ry="7" fill="#2ec45a" /><circle cx="12" cy="12" r="4" fill="#eee" /></svg></TrayItem>
          <TrayItem><svg width="17" height="17" viewBox="0 0 17 17"><path d="M1 1h11v9H1zM6 10v5M2 15.500h9M13 4h3v6" fill="none" stroke="#222" /></svg></TrayItem>
          <TrayItem><svg width="10" height="15" viewBox="0 0 10 15"><path d="M1 5h3l4-4v13L4 10H1z" fill="none" stroke="#222" /></svg></TrayItem>
        </Tray>
      </Taskbar>
    </Page>
  );
}
